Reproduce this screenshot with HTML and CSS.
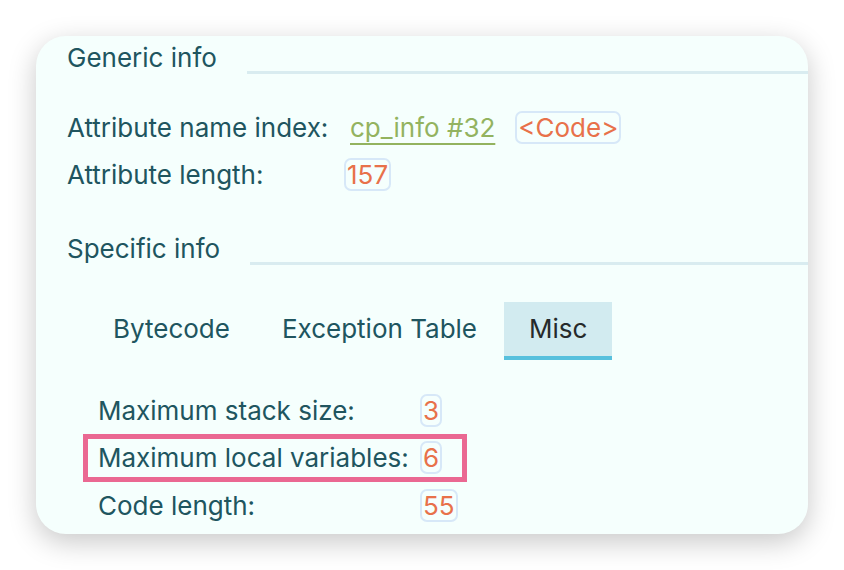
FILE: index.html
```html
<!DOCTYPE html>
<html lang="en">
<head>
<meta charset="utf-8">
<title>Code attribute</title>
<link rel="stylesheet" href="styles.css">
</head>
<body>
<div class="card">
  <div class="section-head">
    <span class="section-title">Generic info</span>
    <span class="section-line"></span>
  </div>
  <div class="attr-list">
    <div class="attr-row">
      <span class="label">Attribute name index:</span>
      <span class="values">
        <a class="link">cp_info #32</a>
        <span class="badge">&lt;Code&gt;</span>
      </span>
    </div>
    <div class="attr-row">
      <span class="label">Attribute length:</span>
      <span class="values"><span class="badge">157</span></span>
    </div>
  </div>
  <div class="section-head specific">
    <span class="section-title">Specific info</span>
    <span class="section-line"></span>
  </div>
  <div class="tabs">
    <div class="tab">Bytecode</div>
    <div class="tab">Exception Table</div>
    <div class="tab active">Misc</div>
  </div>
  <div class="misc-list">
    <div class="misc-row">
      <span class="label">Maximum stack size:</span>
      <span class="values"><span class="badge">3</span></span>
    </div>
    <div class="misc-row highlight">
      <span class="label">Maximum local variables:</span>
      <span class="values"><span class="badge">6</span></span>
    </div>
    <div class="misc-row">
      <span class="label">Code length:</span>
      <span class="values"><span class="badge">55</span></span>
    </div>
  </div>
</div>
</body>
</html>
```
FILE: styles.css
```css
* { box-sizing: border-box; }
html, body { margin: 0; padding: 0; background: #ffffff; }
body {
  font-family: Inter, "Noto Sans", sans-serif;
  font-size: 26px;
  color: #20555f;
  width: 844px;
  height: 570px;
  overflow: hidden;
}
.card {
  margin: 36px 0 0 36px;
  width: 772px;
  height: 498px;
  border-radius: 30px;
  background: #f5fffd;
  box-shadow: 0 8px 28px rgba(0, 0, 0, 0.22);
  padding: 6px 0 0 31px;
  overflow: hidden;
}
.section-head {
  display: flex;
  height: 32px;
  gap: 30px;
}
.section-head.specific { margin-top: 42px; }
.section-title {
  line-height: 32px;
  white-space: nowrap;
}
.section-line {
  flex: 1;
  align-self: flex-end;
  height: 3px;
  background: #d9ecf0;
}
.attr-list {
  margin-top: 37px;
  display: flex;
  flex-direction: column;
  gap: 14px;
}
.attr-row {
  display: grid;
  grid-template-columns: 277px auto;
  align-items: center;
  height: 33px;
}
.values {
  display: flex;
  align-items: center;
  gap: 14px;
}
.link {
  color: #93b35f;
  text-decoration: underline;
  text-decoration-thickness: 2px;
  text-underline-offset: 6px;
  padding: 0 6px;
  line-height: 29px;
}
.badge {
  display: inline-block;
  color: #e8714a;
  border: 2px solid #d7e8f8;
  border-radius: 7px;
  padding: 0 1px;
  line-height: 29px;
}
.tabs {
  margin: 37px 0 0 21px;
  display: flex;
  gap: 2px;
}
.tab {
  height: 58px;
  padding: 0 25px;
  line-height: 54px;
  border-bottom: 4px solid transparent;
}
.tab.active {
  background: #d2ebf0;
  border-bottom-color: #57c0dd;
  color: #262a2b;
}
.misc-list {
  margin: 31px 0 0 21px;
  display: flex;
  flex-direction: column;
  gap: 9.5px;
}
.misc-row {
  display: grid;
  grid-template-columns: 322px auto;
  align-items: center;
  width: 374px;
  height: 38px;
  padding-left: 10px;
}
.misc-row.highlight {
  outline: 5px solid #ea6892;
}
```
